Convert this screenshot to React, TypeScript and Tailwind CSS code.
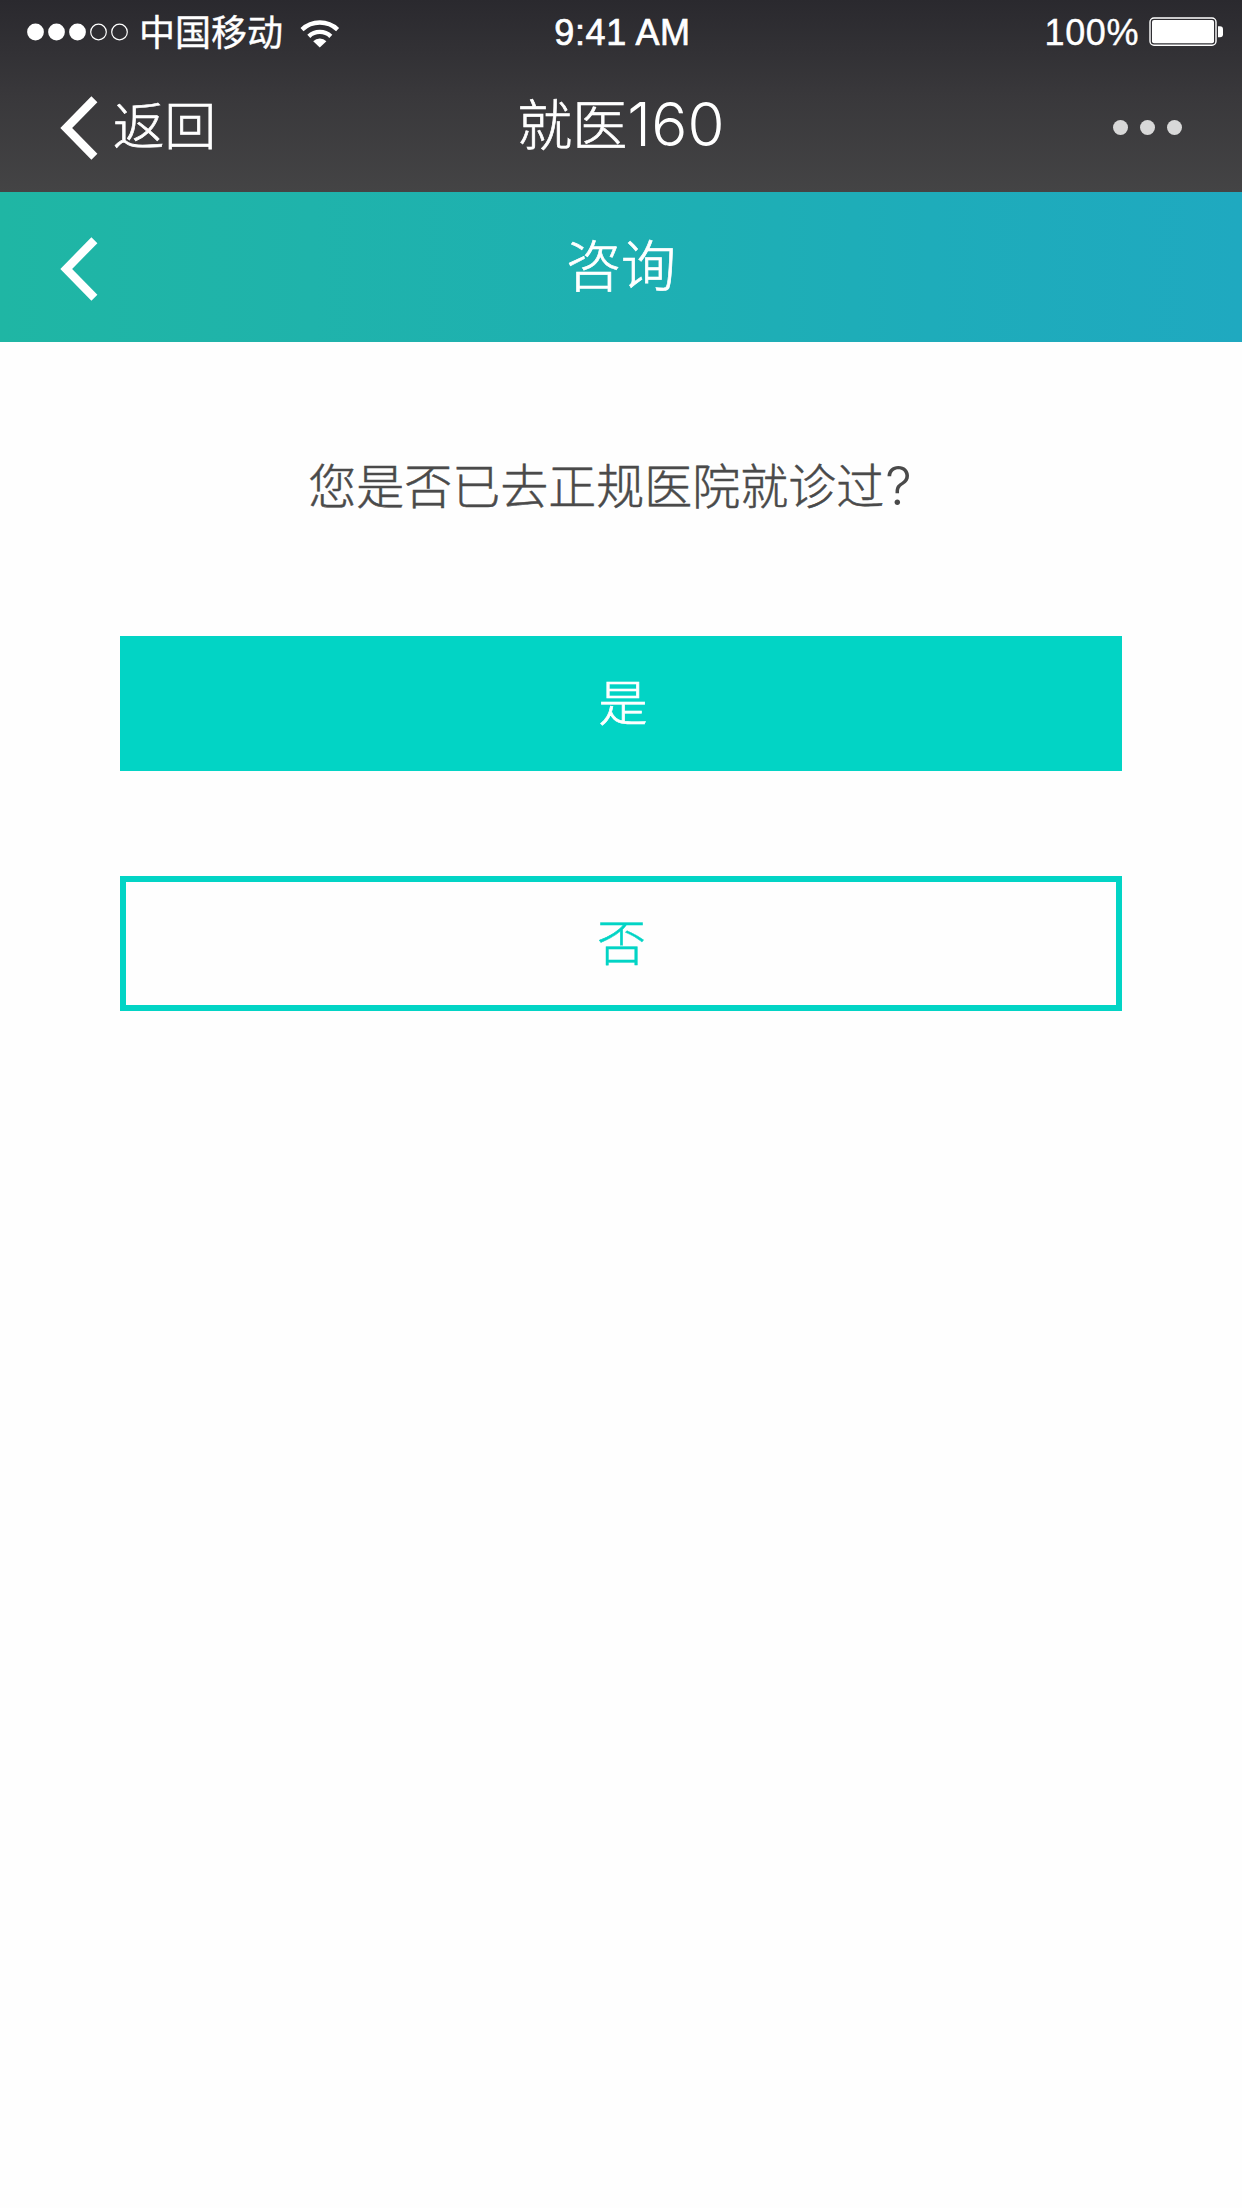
function BackArrow() {
  return (
    <svg className="block h-[64px] w-[38px] shrink-0" viewBox="0 0 38 64" aria-hidden="true">
      <path d="M34.4 3.2 L6.2 32 L34.4 60.8" fill="none" stroke="#fff" strokeWidth="8.4" strokeLinejoin="miter" />
    </svg>
  );
}

function Signal() {
  return (
    <svg className="block h-[18px] w-[102px] shrink-0" viewBox="0 0 102 18" aria-hidden="true">
      <circle cx="8.5" cy="9" r="8.4" fill="#fff" />
      <circle cx="29.5" cy="9" r="8.4" fill="#fff" />
      <circle cx="50.5" cy="9" r="8.4" fill="#fff" />
      <circle cx="71.5" cy="9" r="7.8" fill="none" stroke="#fff" strokeWidth="1.2" />
      <circle cx="92.5" cy="9" r="7.8" fill="none" stroke="#fff" strokeWidth="1.2" />
    </svg>
  );
}

function Wifi() {
  return (
    <svg className="block h-[28px] w-[40px] shrink-0" viewBox="0 0 40 28" aria-hidden="true">
      <path d="M2 9.6 A26 26 0 0 1 37.6 9.6" fill="none" stroke="#fff" strokeWidth="4.4" />
      <path d="M8.8 16.3 A16 16 0 0 1 30.8 16.3" fill="none" stroke="#fff" strokeWidth="4.4" />
      <path d="M13.2 21.2 A9.4 9.4 0 0 1 26.4 21.2 L19.8 27.6 Z" fill="#fff" />
    </svg>
  );
}

function Battery() {
  return (
    <svg className="block h-[30px] w-[75px] shrink-0" viewBox="0 0 75 30" aria-hidden="true">
      <rect x="1" y="1" width="66" height="27.2" rx="4" fill="none" stroke="#fff" strokeWidth="1.4" />
      <rect x="3" y="3" width="62" height="23.2" rx="2" fill="#fff" />
      <path d="M69 9.2 h2 a3 3 0 0 1 3 3 v5 a3 3 0 0 1 -3 3 h-2 z" fill="#fff" />
    </svg>
  );
}

export default function App() {
  return (
    <div className="flex h-[2208px] w-[1242px] flex-col bg-[#fefefe] font-['Noto_Sans_CJK_SC',sans-serif] font-light text-white [-webkit-text-stroke:0.7px_currentColor]">
      <header className="flex h-[192px] flex-col bg-linear-to-b from-[#2a292e] via-[#39383b] to-[#444445]">
        <div className="grid h-[64px] grid-cols-3 items-center">
          <div className="flex items-center pl-[27px]">
            <Signal />
            <span className="ml-[10px] pb-[3px] text-[36px] leading-[61px] font-normal [-webkit-text-stroke:0.4px_white]">中国移动</span>
            <span className="ml-[17px] pt-[4px]"><Wifi /></span>
          </div>
          <div className="pt-px pl-[3px] text-center font-['Liberation_Sans',sans-serif] text-[36px] leading-[63px] font-normal tracking-[0.6px]">9:41 AM</div>
          <div className="flex items-center justify-end pr-[18px]">
            <span className="pt-px font-['Liberation_Sans',sans-serif] text-[36px] leading-[63px] font-normal tracking-[0.6px] [-webkit-text-stroke:0.4px_white]">100%</span>
            <span className="ml-[10px]"><Battery /></span>
          </div>
        </div>
        <div className="grid h-[128px] grid-cols-3">
          <div className="flex items-start pl-[60px]">
            <span className="pt-[32px]"><BackArrow /></span>
            <span className="ml-[15px] pt-[9px] text-[51.5px] leading-[100px]">返回</span>
          </div>
          <h1 className="flex justify-center pt-[7px] text-[55px] leading-[100px]">
            <span>就医</span>
            <span className="pt-[3px] font-['Inter',sans-serif] text-[60px] tracking-[0.2px] [-webkit-text-stroke:0px]">160</span>
          </h1>
          <div className="flex items-start justify-end gap-[12px] pt-[56px] pr-[60px]">
            <span className="size-[15px] rounded-full bg-[#d8d8d8]" />
            <span className="size-[15px] rounded-full bg-[#d8d8d8]" />
            <span className="size-[15px] rounded-full bg-[#d8d8d8]" />
          </div>
        </div>
      </header>
      <nav className="grid h-[150px] grid-cols-3 bg-[linear-gradient(90deg,#1fb6a4_0%,#1fb3ab_25%,#1eb0b2_50%,#1eacba_75%,#1fa9c0_100%)]">
        <div className="pt-[45px] pl-[60px]"><BackArrow /></div>
        <h2 className="pt-[20px] text-center text-[55px] leading-[100px]">咨询</h2>
      </nav>
      <main className="flex flex-col items-center">
        <p className="mt-[91px] flex pr-[22px] text-[48px] leading-[100px] text-[#4a4a4a] [-webkit-text-stroke:0.5px_#4a4a4a]">
          <span>您是否已去正规医院就诊过</span>
          <span className="pt-[3px] pl-px font-['Inter',sans-serif] text-[53px] [-webkit-text-stroke:0px]">?</span>
        </p>
        <button className="mt-[100px] h-[135px] w-[1002px] bg-[#02d4c5] pb-[8px] pl-[4px] text-[49px] leading-[127px]">是</button>
        <button className="mt-[105px] flex h-[135px] w-[1002px] items-center justify-center border-6 border-[#02d4c5] pb-[8px] pl-px text-[49px] leading-[115px] text-[#02d4c5] [-webkit-text-stroke:0.4px_#02d4c5]">否</button>
      </main>
    </div>
  );
}
